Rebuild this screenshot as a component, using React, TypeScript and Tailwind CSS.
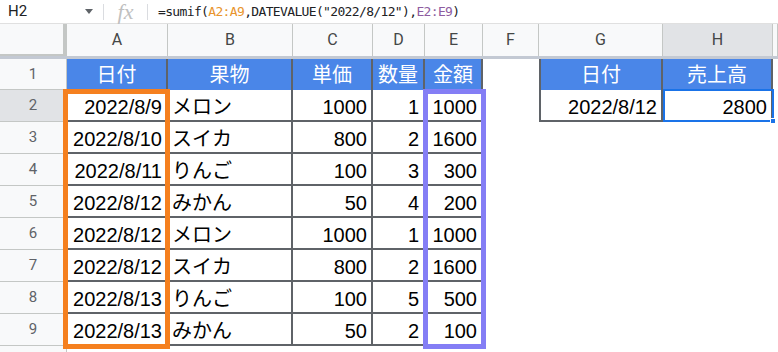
const W = [67, 101, 125, 80, 52, 58, 56, 124, 110, 5]
const LETTERS = ['', 'A', 'B', 'C', 'D', 'E', 'F', 'G', 'H', '']

const rows: [string, string, string, string, string][] = [
  ['2022/8/9', 'メロン', '1000', '1', '1000'],
  ['2022/8/10', 'スイカ', '800', '2', '1600'],
  ['2022/8/11', 'りんご', '100', '3', '300'],
  ['2022/8/12', 'みかん', '50', '4', '200'],
  ['2022/8/12', 'メロン', '1000', '1', '1000'],
  ['2022/8/12', 'スイカ', '800', '2', '1600'],
  ['2022/8/13', 'りんご', '100', '5', '500'],
  ['2022/8/13', 'みかん', '50', '2', '100'],
]

const font = "font-['Liberation_Sans','Noto_Sans_CJK_JP',sans-serif]"
const line = 'border-[#5f6368]'

function RowNum({ n, h, active }: { n?: number; h: string; active?: boolean }) {
  return (
    <div
      className={`${h} w-[67px] shrink-0 flex items-center justify-center border-r border-b border-[#c4c7c5] text-[15px] text-[#5f6368] font-['Roboto',sans-serif] ${active ? 'bg-[#e1e3e6]' : 'bg-[#f8f9fa]'}`}
    >
      {n}
    </div>
  )
}

function Head({ w, children }: { w: number; children: string }) {
  return (
    <div
      style={{ width: w }}
      className={`shrink-0 h-full flex items-center justify-center bg-[#4a86e8] text-white text-[20px] border-r-2 ${line} ${font}`}
    >
      {children}
    </div>
  )
}

function Cell({ w, children, left }: { w: number; children: string; left?: boolean }) {
  return (
    <div
      style={{ width: w }}
      className={`shrink-0 h-full flex items-center ${left ? 'justify-start pl-[4px]' : 'justify-end pr-[4px]'} pt-[3px] text-[20px] text-black border-r-2 border-b-2 ${line} ${font}`}
    >
      {children}
    </div>
  )
}

function FormulaBar() {
  return (
    <div className="h-[24px] flex items-center bg-white border-b border-[#e0e0e0] font-['Roboto',sans-serif]">
      <div className="w-[103px] h-full flex items-center justify-between pl-[8px] pr-[10px] text-[15px] text-[#202124]">
        <span>H2</span>
        <svg width="8" height="5" viewBox="0 0 8 5">
          <path d="M0 0h8L4 5z" fill="#5f6368" />
        </svg>
      </div>
      <div className="w-px h-[16px] bg-[#dadce0]" />
      <div className="w-[43px] text-center text-[22px] italic text-[#c0c0c0] font-['Liberation_Serif',serif] leading-none">
        fx
      </div>
      <div className="w-px h-[16px] bg-[#dadce0]" />
      <div className="pl-[10px] text-[13px] tracking-[-0.65px] text-[#202124] font-['DejaVu_Sans_Mono',monospace]">
        =sumif(<span className="text-[#e8942c]">A2:A9</span>,DATEVALUE("2022/8/12"),<span className="text-[#8e5ca0]">E2:E9</span>)
      </div>
    </div>
  )
}

function ColumnHeader() {
  return (
    <div className="h-[35px] flex bg-[#f8f9fa] border-b-[3px] border-[#c3c9d3]">
      <div className="w-[67px] shrink-0 border-r-4 border-b-2 border-[#c4c7c5]" />
      {W.slice(1).map((w, i) => (
        <div
          key={i}
          style={{ width: w }}
          className={`shrink-0 flex items-center justify-center text-[16px] text-[#444746] font-['Roboto',sans-serif] border-r border-[#c4c7c5] ${LETTERS[i + 1] === 'H' ? 'bg-[#e1e3e6]' : ''}`}
        >
          {LETTERS[i + 1]}
        </div>
      ))}
    </div>
  )
}

export default function App() {
  return (
    <div className="w-[778px] h-[352px] overflow-hidden bg-white">
      <FormulaBar />
      <ColumnHeader />
      <div className="relative">
        {/* row 1 */}
        <div className="flex h-[31px]">
          <RowNum n={1} h="h-[31px]" />
          <Head w={W[1]}>日付</Head>
          <Head w={W[2]}>果物</Head>
          <Head w={W[3]}>単価</Head>
          <Head w={W[4]}>数量</Head>
          <Head w={W[5]}>金額</Head>
          <div style={{ width: W[6] }} className="shrink-0" />
          <div className={`flex h-full border-l-2 ${line}`}>
            <Head w={W[7] - 2}>日付</Head>
            <Head w={W[8]}>売上高</Head>
          </div>
        </div>

        {rows.map((r, i) => (
          <div key={i} className="flex h-[32px]">
            <RowNum n={i + 2} h="h-[32px]" active={i === 0} />
            <Cell w={W[1]}>{r[0]}</Cell>
            <Cell w={W[2]} left>{r[1]}</Cell>
            <Cell w={W[3]}>{r[2]}</Cell>
            <Cell w={W[4]}>{r[3]}</Cell>
            <Cell w={W[5]}>{r[4]}</Cell>
            <div style={{ width: W[6] }} className="shrink-0" />
            {i === 0 && (
              <div className={`flex h-full border-l-2 ${line}`}>
                <Cell w={W[7] - 2}>2022/8/12</Cell>
                <Cell w={W[8]}>2800</Cell>
              </div>
            )}
          </div>
        ))}

        <div className="flex h-[10px]">
          <RowNum h="h-[10px]" />
        </div>

        {/* range highlights */}
        <div className="absolute left-[63px] top-[30px] w-[107px] h-[260px] border-[5px] border-[#f5801f] pointer-events-none" />
        <div className="absolute left-[423px] top-[30px] w-[63px] h-[260px] border-[5px] border-[#847ef5] pointer-events-none" />

        {/* selected cell H2 */}
        <div className="absolute left-[663px] top-[30px] w-[111px] h-[33px] border-2 border-[#1a73e8] pointer-events-none" />
        <div className="absolute left-[770px] top-[59px] w-[6px] h-[6px] bg-[#1a73e8] border border-white" />
      </div>
    </div>
  )
}
